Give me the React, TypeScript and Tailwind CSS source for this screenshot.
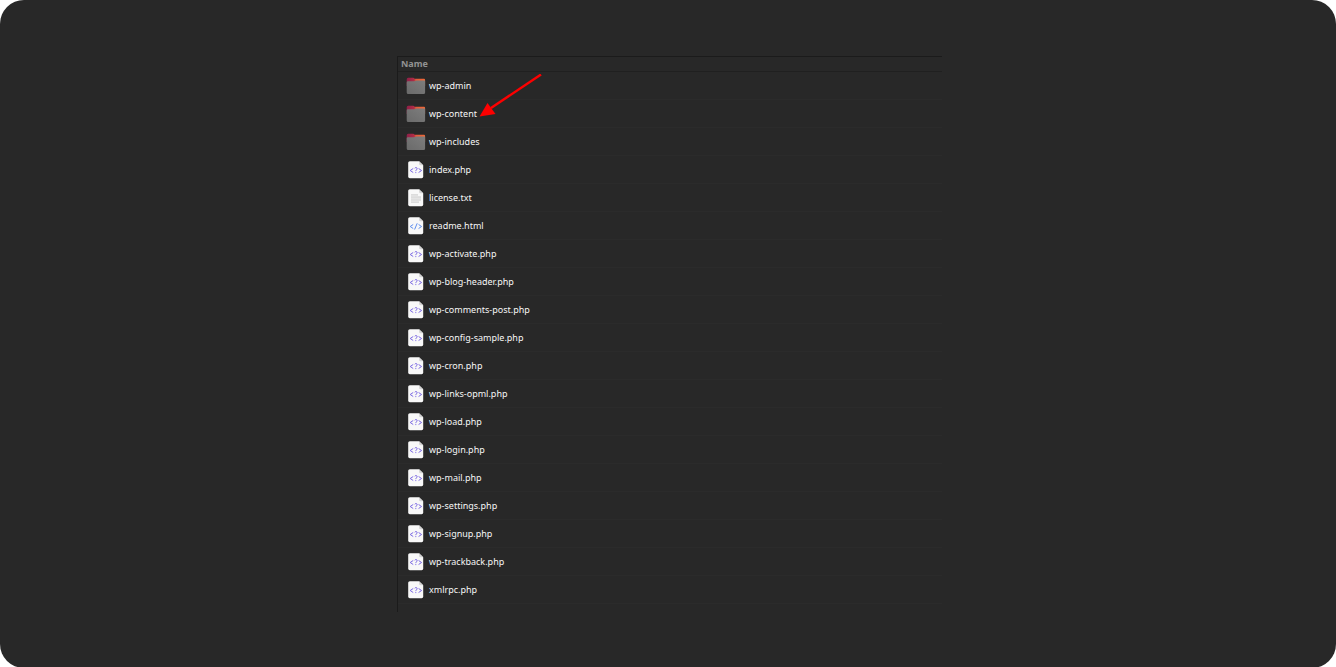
type Kind = 'folder' | 'php' | 'text' | 'html';

const entries: { name: string; kind: Kind }[] = [
  { name: 'wp-admin', kind: 'folder' },
  { name: 'wp-content', kind: 'folder' },
  { name: 'wp-includes', kind: 'folder' },
  { name: 'index.php', kind: 'php' },
  { name: 'license.txt', kind: 'text' },
  { name: 'readme.html', kind: 'html' },
  { name: 'wp-activate.php', kind: 'php' },
  { name: 'wp-blog-header.php', kind: 'php' },
  { name: 'wp-comments-post.php', kind: 'php' },
  { name: 'wp-config-sample.php', kind: 'php' },
  { name: 'wp-cron.php', kind: 'php' },
  { name: 'wp-links-opml.php', kind: 'php' },
  { name: 'wp-load.php', kind: 'php' },
  { name: 'wp-login.php', kind: 'php' },
  { name: 'wp-mail.php', kind: 'php' },
  { name: 'wp-settings.php', kind: 'php' },
  { name: 'wp-signup.php', kind: 'php' },
  { name: 'wp-trackback.php', kind: 'php' },
  { name: 'xmlrpc.php', kind: 'php' },
];

function FolderIcon() {
  return (
    <svg width="20" height="20" viewBox="0 0 20 20" aria-hidden="true">
      <defs>
        <linearGradient id="folder-back" x1="0" x2="1">
          <stop offset="0" stopColor="#8e1f48" />
          <stop offset="0.4" stopColor="#b02c45" />
          <stop offset="0.5" stopColor="#e25a3a" />
          <stop offset="1" stopColor="#f06a38" />
        </linearGradient>
        <linearGradient id="folder-front" x1="0" y1="1" x2="1" y2="0">
          <stop offset="0" stopColor="#6a6a6a" />
          <stop offset="1" stopColor="#7d7d7d" />
        </linearGradient>
      </defs>
      <path d="M0.7 3.4Q0.7 1.8 2.2 1.8H7.2Q8 1.8 8.4 2.4L8.8 2.8H18Q19.1 2.8 19.1 4.2V10H0.7Z" fill="url(#folder-back)" />
      <path d="M0.7 6.4Q0.7 5.3 1.8 5.3H7.5Q8.3 5.3 8.9 4.9T10.3 4.5H18.4Q19.1 4.5 19.1 5.2V16.5Q19.1 18 17.6 18H2.2Q0.7 18 0.7 16.5Z" fill="url(#folder-front)" />
    </svg>
  );
}

function FileIcon({ kind }: { kind: Kind }) {
  return (
    <svg width="20" height="20" viewBox="0 0 20 20" aria-hidden="true">
      <path d="M4.2 1.2H13.1L17.2 5.3V16.6Q17.2 18.2 15.6 18.2H3.8Q2.2 18.2 2.2 16.6V2.8Q2.2 1.2 3.8 1.2Z" fill="#f8f8f8" />
      <path d="M13.1 1.2L17.2 5.3H14.5Q13.1 5.3 13.1 3.9Z" fill="#d4d4d4" />
      {kind === 'text' ? (
        <g fill="#dcdcdc">
          <path d="M5 6H12V8H15V13H13V15H5Z" opacity="0.7" />
          <path d="M5 6H12V7.3H5ZM5 8.5H15V10H5ZM5 11.3H15V12.6H5ZM5 14H13V15H5Z" />
        </g>
      ) : (
        <g fill="none" stroke={kind === 'php' ? '#7b68e4' : '#5f8fee'} strokeWidth="1">
          <path d="M7.2 8.5L4.2 10.5L7.2 12.5M12.6 8.5L15.6 10.5L12.6 12.5" />
          {kind === 'php' ? (
            <path d="M8.6 8.3Q9 7.6 9.9 7.6Q11.2 7.6 11.2 8.7Q11.2 9.5 10.4 9.9T9.8 11.1M9.8 12.1V13.1" />
          ) : (
            <path d="M11.2 7.3L8.6 13.5" />
          )}
        </g>
      )}
    </svg>
  );
}

function Arrow() {
  return (
    <svg className="absolute -top-8 left-full ml-0.5" width="66" height="48" viewBox="0 0 66 48" aria-hidden="true">
      <path d="M62 0.5L12 34" stroke="#fd0000" strokeWidth="2.4" />
      <path d="M0.5 42.5L8.5 29L16.5 40Z" fill="#fd0000" />
    </svg>
  );
}

export default function App() {
  return (
    <div className="bg-white">
      <main className="min-h-screen rounded-3xl bg-[#282828] pt-14 pr-4 pb-14 pl-[19px] font-['Noto_Sans','Open_Sans',sans-serif] text-white">
        <div className="mx-auto max-w-[545px] border-t border-l border-[#1b1b1b] pb-2">
          <table className="w-full border-separate border-spacing-0 text-left">
            <thead>
              <tr>
                <th scope="col" className="h-[15px] border-b border-[#202020] p-0 pl-[3px] text-[9px] leading-[14px] font-bold text-[#929292]">
                  Name
                </th>
              </tr>
            </thead>
            <tbody>
              {entries.map(({ name, kind }) => (
                <tr key={name}>
                  <td className="h-7 border-b border-[#2b2b2b] p-0 pl-2">
                    <div className="flex items-center gap-[3px]">
                      {kind === 'folder' ? <FolderIcon /> : <FileIcon kind={kind} />}
                      <span className="relative text-[9px] leading-4 text-[#f6f6f6]">
                        {name}
                        {name === 'wp-content' && <Arrow />}
                      </span>
                    </div>
                  </td>
                </tr>
              ))}
            </tbody>
          </table>
        </div>
      </main>
    </div>
  );
}
